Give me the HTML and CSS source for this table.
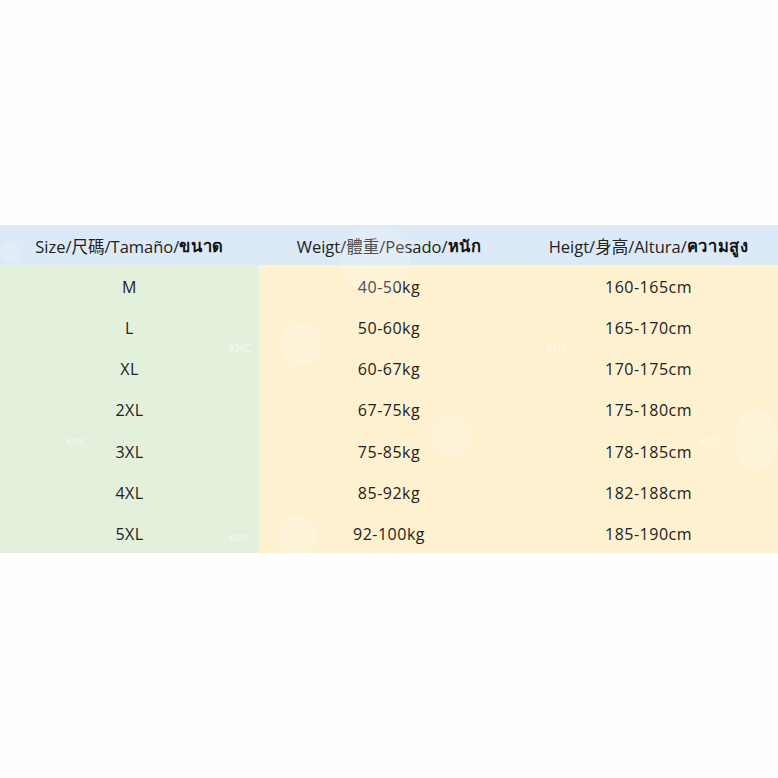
FILE: index.html
```html
<!DOCTYPE html>
<html>
<head>
<meta charset="utf-8">
<link rel="stylesheet" href="styles.css">
</head>
<body>
<div class="page">
  <div class="chart">
    <div class="head">
      <div class="cell">Size/尺碼/Tamaño/<b>ขนาด</b></div>
      <div class="cell">Weigt/體重/Pesado/<b>หนัก</b></div>
      <div class="cell">Heigt/身高/Altura/<b>ความสูง</b></div>
    </div>
    <div class="body">
      <div class="col green">
        <div class="cell">M</div>
        <div class="cell">L</div>
        <div class="cell">XL</div>
        <div class="cell">2XL</div>
        <div class="cell">3XL</div>
        <div class="cell">4XL</div>
        <div class="cell">5XL</div>
      </div>
      <div class="col yellow">
        <div class="cell">40-50kg</div>
        <div class="cell">50-60kg</div>
        <div class="cell">60-67kg</div>
        <div class="cell">67-75kg</div>
        <div class="cell">75-85kg</div>
        <div class="cell">85-92kg</div>
        <div class="cell">92-100kg</div>
      </div>
      <div class="col yellow">
        <div class="cell">160-165cm</div>
        <div class="cell">165-170cm</div>
        <div class="cell">170-175cm</div>
        <div class="cell">175-180cm</div>
        <div class="cell">178-185cm</div>
        <div class="cell">182-188cm</div>
        <div class="cell">185-190cm</div>
      </div>
    </div>
    <span class="bubble b1"></span>
    <span class="bubble b2"></span>
    <span class="bubble b3"></span>
    <span class="bubble b4"></span>
    <span class="bubble b5"></span>
    <span class="bubble b6"></span>
    <span class="mark m1">KMC</span>
    <span class="mark m2">KMC</span>
    <span class="mark m3">KMC</span>
    <span class="mark m4">KMC</span>
    <span class="mark m5">KMC</span>
  </div>
</div>
</body>
</html>
```
FILE: styles.css
```css
html, body {
  margin: 0;
  padding: 0;
  background: #fefefe;
}
.page {
  width: 778px;
  height: 778px;
  padding-top: 225px;
  box-sizing: border-box;
  font-family: "Open Sans", "Noto Sans", "Noto Sans CJK SC", sans-serif;
  color: #222;
}
.chart {
  position: relative;
  overflow: hidden;
}
.head {
  display: grid;
  grid-template-columns: 259px 260px 259px;
  height: 40px;
  background: #dce9f6;
  font-size: 16.5px;
}
.head .cell {
  display: flex;
  align-items: center;
  justify-content: center;
  padding-top: 2px;
}
.head b {
  font-weight: 700;
  color: #111;
  letter-spacing: 0.6px;
}
.body {
  display: grid;
  grid-template-columns: 259px 260px 259px;
}
.col {
  display: flex;
  flex-direction: column;
}
.green { background: #e3f1dc; }
.yellow { background: #fdf1d0; }
.col .cell {
  height: 41.15px;
  box-sizing: border-box;
  padding-top: 3px;
  display: flex;
  align-items: center;
  justify-content: center;
  font-size: 16px;
  letter-spacing: 0.5px;
}
.bubble {
  position: absolute;
  border-radius: 50%;
  background: rgba(255, 255, 255, 0.2);
}
.b1 { left: 340px; top: 0; width: 70px; height: 70px; }
.b2 { left: 280px; top: 98px; width: 42px; height: 42px; }
.b3 { left: 430px; top: 190px; width: 42px; height: 42px; }
.b4 { left: 0; top: 18px; width: 20px; height: 20px; }
.b5 { left: 735px; top: 185px; width: 43px; height: 60px; }
.b6 { left: 278px; top: 290px; width: 40px; height: 40px; }
.mark {
  position: absolute;
  font-size: 10px;
  color: rgba(255, 255, 255, 0.55);
  font-family: "DejaVu Sans", sans-serif;
}
.m1 { left: 229px; top: 118px; }
.m2 { left: 546px; top: 118px; }
.m3 { left: 66px; top: 212px; }
.m4 { left: 700px; top: 212px; }
.m5 { left: 229px; top: 308px; }
```
